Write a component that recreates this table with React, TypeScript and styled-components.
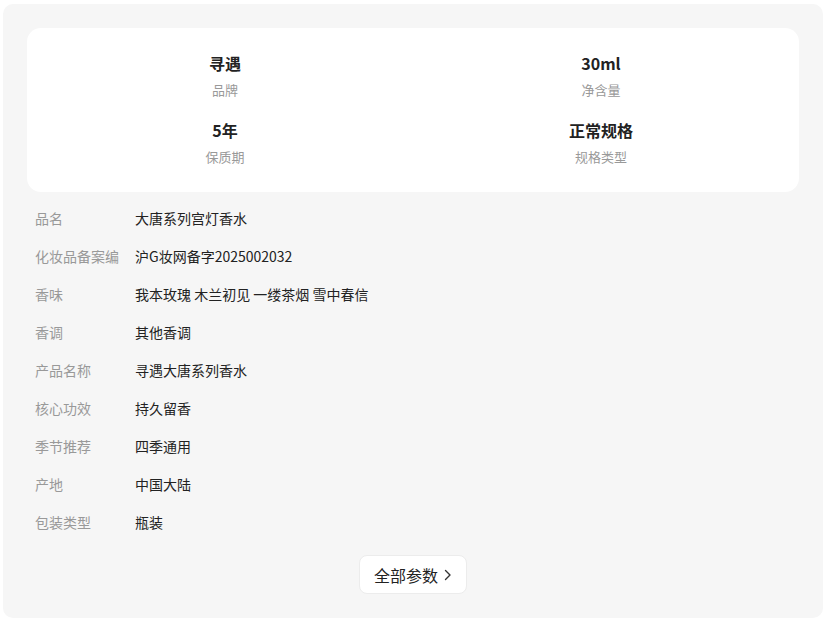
import styled, { createGlobalStyle } from "styled-components";

const GlobalStyle = createGlobalStyle`
  body {
    margin: 0;
    background: #fff;
    font-family: "Noto Sans CJK SC", "Noto Sans", sans-serif;
  }
`;

const summary = [
  { value: "寻遇", label: "品牌" },
  { value: "30ml", label: "净含量" },
  { value: "5年", label: "保质期" },
  { value: "正常规格", label: "规格类型" },
];

const params = [
  { label: "品名", value: "大唐系列宫灯香水" },
  { label: "化妆品备案编号", value: "沪G妆网备字2025002032" },
  { label: "香味", value: "我本玫瑰 木兰初见 一缕茶烟 雪中春信" },
  { label: "香调", value: "其他香调" },
  { label: "产品名称", value: "寻遇大唐系列香水" },
  { label: "核心功效", value: "持久留香" },
  { label: "季节推荐", value: "四季通用" },
  { label: "产地", value: "中国大陆" },
  { label: "包装类型", value: "瓶装" },
];

const App = () => {
  return (
    <>
      <GlobalStyle />
      <StPanel>
        <StSummary>
          {summary.map((item) => (
            <StSummaryItem key={item.label}>
              <StSummaryValue>{item.value}</StSummaryValue>
              <StSummaryLabel>{item.label}</StSummaryLabel>
            </StSummaryItem>
          ))}
        </StSummary>
        <StList>
          {params.map((row) => (
            <StRow key={row.label}>
              <StRowLabel title={row.label}>{row.label}</StRowLabel>
              <StRowValue>{row.value}</StRowValue>
            </StRow>
          ))}
        </StList>
        <StFooter>
          <StMoreBtn type="button">
            全部参数
            <svg width="8" height="12" viewBox="0 0 8 12" fill="none">
              <path
                d="M1.5 1.5 L6 6 L1.5 10.5"
                stroke="#333"
                strokeWidth="1.4"
                strokeLinecap="round"
                strokeLinejoin="round"
              />
            </svg>
          </StMoreBtn>
        </StFooter>
      </StPanel>
    </>
  );
};

export default App;

const StPanel = styled.div`
  margin: 4px 10px 0 3px;
  padding: 24px;
  background-color: #f6f6f6;
  border-radius: 10px;
  display: flex;
  flex-direction: column;
`;

const StSummary = styled.div`
  display: grid;
  grid-template-columns: 1fr 1fr;
  row-gap: 18px;
  padding: 23px 10px 25px;
  background-color: #fff;
  border-radius: 14px;
`;

const StSummaryItem = styled.div`
  display: flex;
  flex-direction: column;
  align-items: center;
  gap: 5px;
`;

const StSummaryValue = styled.div`
  font-size: 16px;
  line-height: 24px;
  font-weight: bold;
  color: #222;
`;

const StSummaryLabel = styled.div`
  font-size: 13px;
  line-height: 20px;
  color: #999;
`;

const StList = styled.div`
  display: flex;
  flex-direction: column;
  margin-top: 7px;
  padding: 0 8px;
`;

const StRow = styled.div`
  display: flex;
  align-items: center;
  height: 38px;
  font-size: 14px;
`;

const StRowLabel = styled.div`
  width: 84px;
  margin-right: 16px;
  flex-shrink: 0;
  overflow: hidden;
  white-space: nowrap;
  color: #999;
`;

const StRowValue = styled.div`
  color: #222;
`;

const StFooter = styled.div`
  display: flex;
  justify-content: center;
  margin-top: 14px;
`;

const StMoreBtn = styled.button`
  display: flex;
  align-items: center;
  gap: 6px;
  height: 39px;
  padding: 0 14px;
  background-color: #fff;
  border: 1px solid #ececec;
  border-radius: 8px;
  font-family: inherit;
  font-size: 16px;
  color: #222;
  cursor: pointer;
`;
